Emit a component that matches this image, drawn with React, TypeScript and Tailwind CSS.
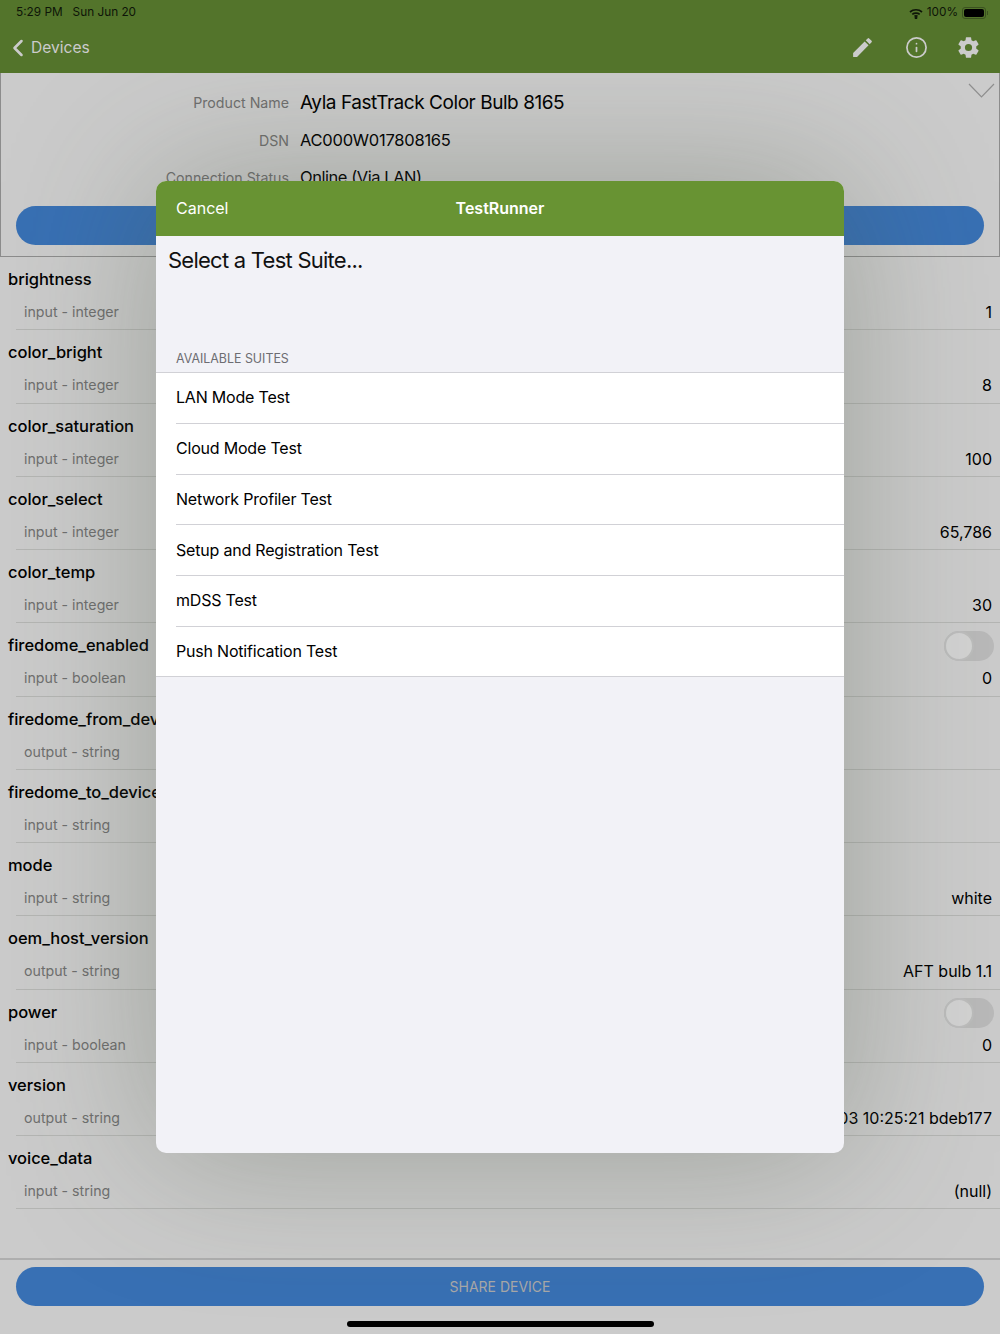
import { ChevronLeft, Info } from 'lucide-react'
import { MdEdit } from 'react-icons/md'
import { IoSettingsSharp } from 'react-icons/io5'

type Property = { name: string; type: string; value?: string; toggle?: boolean }

const PROPERTIES: Property[] = [
  { name: 'brightness', type: 'input - integer', value: '1' },
  { name: 'color_bright', type: 'input - integer', value: '8' },
  { name: 'color_saturation', type: 'input - integer', value: '100' },
  { name: 'color_select', type: 'input - integer', value: '65,786' },
  { name: 'color_temp', type: 'input - integer', value: '30' },
  { name: 'firedome_enabled', type: 'input - boolean', value: '0', toggle: true },
  { name: 'firedome_from_device', type: 'output - string' },
  { name: 'firedome_to_device', type: 'input - string' },
  { name: 'mode', type: 'input - string', value: 'white' },
  { name: 'oem_host_version', type: 'output - string', value: 'AFT bulb 1.1' },
  { name: 'power', type: 'input - boolean', value: '0', toggle: true },
  { name: 'version', type: 'output - string', value: 'ADA 1.9 2021-03-03 10:25:21 bdeb177' },
  { name: 'voice_data', type: 'input - string', value: '(null)' },
]

const SUITES = [
  'LAN Mode Test',
  'Cloud Mode Test',
  'Network Profiler Test',
  'Setup and Registration Test',
  'mDSS Test',
  'Push Notification Test',
]

function InfoRow({ label, value, valueClass }: { label: string; value: string; valueClass: string }) {
  return (
    <div className="flex h-[37.5px] items-center">
      <div className="w-[288px] text-right text-[14.2px] text-[#6f6f6f]">{label}</div>
      <div className={`ml-[11px] text-black ${valueClass}`}>{value}</div>
    </div>
  )
}

function PropertyRow({ property }: { property: Property }) {
  return (
    <div className="relative h-[73.25px] pl-2">
      <div className="pt-[11px] text-[16.5px] leading-[22px] font-medium tracking-[-0.05px] text-black">{property.name}</div>
      {property.toggle && (
        <div className="absolute top-[8px] right-[6px] h-[30px] w-[50px] rounded-full bg-[#b9b9b9]">
          <div className="h-[30px] w-[30px] rounded-full border-2 border-[#bcbcbc] bg-[#d2d2d2]" />
        </div>
      )}
      <div className="mt-[11px] flex items-center justify-between pr-2 pl-4">
        <span className="text-[14.2px] leading-[22px] text-[#6f6f6f]">{property.type}</span>
        {property.value && <span className="text-[16px] leading-[22px] text-black">{property.value}</span>}
      </div>
      <div className="absolute right-0 bottom-0 left-4 h-px bg-[#b4b5b3]" />
    </div>
  )
}

export default function App() {
  return (
    <div className="relative h-[1334px] w-[1000px] overflow-hidden bg-[#cbcbcb] font-['Inter','Liberation_Sans',sans-serif]">
      {/* status bar + nav */}
      <div className="relative z-10 h-[73px] bg-[#53742b]">
        <div className="flex h-[24px] items-center justify-between pt-[2px] pr-[12px] pl-4 text-[11.8px] text-[#0e1508]">
          <div className="flex gap-[10px]">
            <span>5:29 PM</span>
            <span>Sun Jun 20</span>
          </div>
          <div className="flex items-center gap-[4px]">
            <svg width="14" height="11" viewBox="0 0 14 11" fill="none" stroke="#0e1508" strokeWidth="1.7">
              <path d="M1 4c3.4-3 8.6-3 12 0" />
              <path d="M3.3 6.3c2-1.7 5.4-1.7 7.4 0" />
              <path d="M5.5 8.4c.9-.7 2.1-.7 3 0" />
              <circle cx="7" cy="9.7" r=".6" fill="#0e1508" />
            </svg>
            <span>100%</span>
            <div className="flex items-center">
              <div className="h-[12px] w-[24px] rounded-[3px] border border-[#3b5220] p-[1px]">
                <div className="h-full w-full rounded-[2px] bg-black" />
              </div>
              <div className="ml-px h-[4px] w-px bg-[#3b5220]" />
            </div>
          </div>
        </div>
        <div className="flex h-[47px] items-center justify-between pr-[20px]">
          <div className="flex items-center text-[#cbcbcb]">
            <ChevronLeft size={28} strokeWidth={2.2} className="ml-[4px]" />
            <span className="ml-[-1px] text-[15.6px]">Devices</span>
          </div>
          <div className="flex items-center gap-[29.5px] text-[#cbcbcb]">
            <MdEdit size={25} />
            <Info size={23} strokeWidth={1.8} />
            <IoSettingsSharp size={23} />
          </div>
        </div>
      </div>

      {/* device info */}
      <div className="relative h-[184px] border-x border-b border-[#8c8c8c] pt-[11px]">
        <InfoRow label="Product Name" value="Ayla FastTrack Color Bulb 8165" valueClass="text-[19px] tracking-[-0.45px]" />
        <InfoRow label="DSN" value="AC000W017808165" valueClass="text-[16.5px] tracking-[-0.25px]" />
        <InfoRow label="Connection Status" value="Online (Via LAN)" valueClass="text-[16.5px] tracking-[-0.45px]" />
        <svg className="absolute top-[10px] right-[4px]" width="27" height="16" viewBox="0 0 27 16" fill="none" stroke="#8e8e8e" strokeWidth="1.2">
          <path d="M1 1l12.5 13L26 1" />
        </svg>
        <div className="mx-[15px] mt-[9px] h-[39px] rounded-full bg-[#3870b4]" />
      </div>

      {/* properties */}
      <div className="h-[1001px]">
        {PROPERTIES.map((property) => (
          <PropertyRow key={property.name} property={property} />
        ))}
      </div>

      {/* footer */}
      <div className="absolute inset-x-0 top-[1258px] h-[76px] border-t-2 border-[#aeaeae]">
        <div className="mx-4 mt-[7px] flex h-[39px] items-center justify-center rounded-full bg-[#3870b4] text-[14px] text-[#a8a8a8]">
          SHARE DEVICE
        </div>
      </div>
      <div className="absolute bottom-[7px] left-[347px] h-[6px] w-[307px] rounded-full bg-black" />

      {/* modal */}
      <div className="absolute top-[181px] left-[156px] h-[972px] w-[688px] overflow-hidden rounded-[10px] bg-[#f2f2f7] shadow-[0_0_150px_rgba(70,80,60,0.35)]">
        <div className="relative flex h-[55px] items-center justify-center bg-[#689333] pb-[1px] text-[16px] text-white">
          <span className="absolute left-[20px]">Cancel</span>
          <span className="font-semibold">TestRunner</span>
        </div>
        <div className="pt-[9px] pl-3 text-[22px] leading-[30px] tracking-[-0.75px] text-[#111]">Select a Test Suite...</div>
        <div className="mt-[76px] pl-5 text-[12.4px] leading-[16px] text-[#6d6d72]">AVAILABLE SUITES</div>
        <div className="mt-[4.6px] border-y border-[#d1d1d6] bg-white">
          {SUITES.map((suite, i) => (
            <div key={suite} className="pl-5">
              <div className={`flex h-[50.6px] items-center pb-[1px] text-[16px] tracking-[-0.2px] text-black ${i > 0 ? 'border-t border-[#d1d1d6]' : ''}`}>{suite}</div>
            </div>
          ))}
        </div>
      </div>
    </div>
  )
}
